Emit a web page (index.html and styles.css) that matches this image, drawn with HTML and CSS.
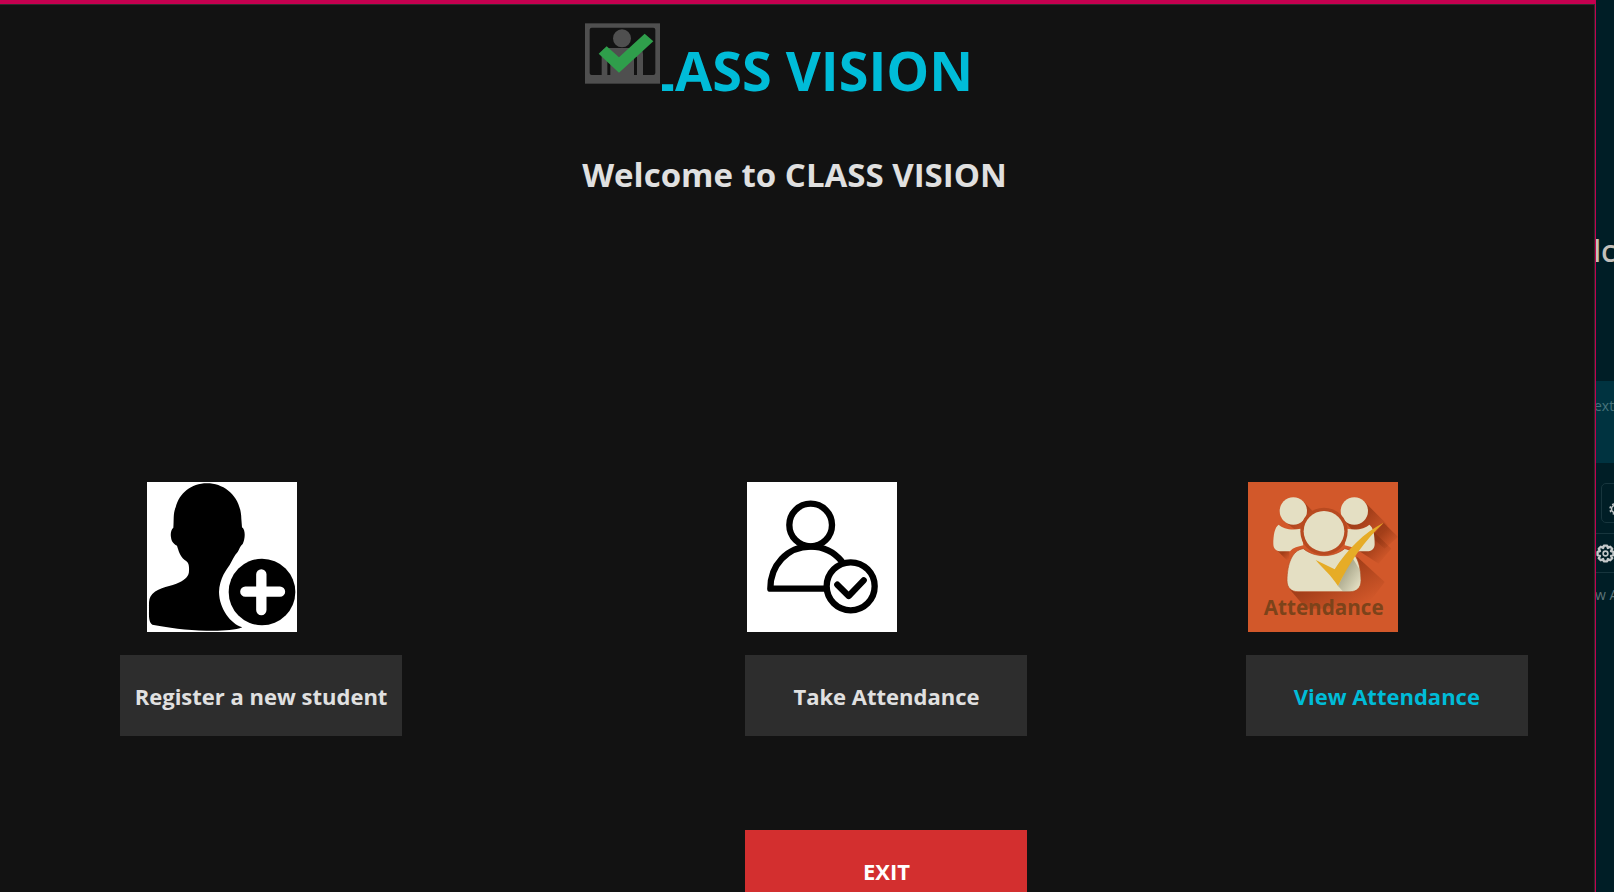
FILE: index.html
```html
<!DOCTYPE html>
<html lang="en">
<head>
<meta charset="utf-8">
<meta name="viewport" content="width=device-width, initial-scale=1">
<title>Class Vision</title>
<link rel="stylesheet" href="styles.css">
</head>
<body>
<div class="desktop">
  <main class="window">
    <header class="brand">
      <h1 class="brand-title">CLASS VISION</h1>
      <div class="brand-logo">
        <svg viewBox="0 0 225 181" aria-hidden="true">
          <rect width="225" height="181" fill="#4f4f4f"/>
          <rect x="14" y="13" width="197" height="142" rx="6" fill="#121212"/>
          <circle cx="111" cy="45" r="27" fill="#4f4f4f"/>
          <path fill="#4f4f4f" d="M50 156V92Q50 74 70 74H154Q174 74 174 92V156H156V100H147V156H76V100H67V156Z"/>
          <path fill="#2f9e4b" d="M41 91L65 69L102 102L179 31L205 54L102 148Z"/>
        </svg>
      </div>
    </header>
    <h2 class="welcome">Welcome to CLASS VISION</h2>
    <div class="actions">
      <section class="action action-register">
        <svg class="picture" viewBox="0 0 450 450" aria-hidden="true">
          <rect width="450" height="450" fill="#fff"/>
          <path d="M180 4C235 4 282 46 283 110L285 136C297 145 294 172 287 186C279 192 277 202 272 210C262 220 256 236 248 249C240 260 217 290 216 330C217 380 250 425 286 436C262 446 215 447 178 446C120 445 60 436 16 428C4 420 6 400 6 380C6 365 4 348 16 336C38 315 72 314 98 301C115 292 126 282 126 266C127 248 124 240 113 234C98 222 95 206 90 191C78 186 73 176 72 166C70 156 72 143 79 137C81 114 78 94 86 76C97 34 132 4 180 4Z"/>
          <circle cx="345" cy="330" r="100"/>
          <path d="M343 277V384M295 329H399" stroke="#fff" stroke-width="31" stroke-linecap="round"/>
        </svg>
        <button class="button" type="button">Register a new student</button>
      </section>
      <section class="action action-take">
        <svg class="picture" viewBox="0 0 450 450" aria-hidden="true">
          <rect width="450" height="450" fill="#fff"/>
          <g fill="none" stroke="#000" stroke-width="19" stroke-linecap="round" stroke-linejoin="round">
            <circle cx="191" cy="129" r="64"/>
            <path d="M238 320H70C70 250 120 194 191 194C230 194 262 211 284 238"/>
            <circle cx="311" cy="313" r="72"/>
            <path d="M271 308L305 342L350 295"/>
          </g>
        </svg>
        <button class="button" type="button">Take Attendance</button>
      </section>
      <section class="action action-view">
        <svg class="picture" viewBox="0 0 450 450" aria-hidden="true">
          <defs>
            <linearGradient id="cast" x1="0" y1="0" x2="1" y2="1">
              <stop offset="0.4" stop-color="#8f3412" stop-opacity="0.7"/>
              <stop offset="0.85" stop-color="#8f3412" stop-opacity="0"/>
            </linearGradient>
            <linearGradient id="fold" x1="0" y1="0" x2="1" y2="1">
              <stop offset="0.3" stop-color="#8c8c70" stop-opacity="0.7"/>
              <stop offset="0.9" stop-color="#8c8c70" stop-opacity="0"/>
            </linearGradient>
          </defs>
          <rect width="450" height="450" fill="#d2582a"/>
          <g fill="url(#cast)">
            <path d="M164 57L206 99L150 150L108 117Z"/>
            <path d="M347 57L420 130L350 190L290 117Z"/>
            <path d="M378 150L430 200L392 245L330 205Z"/>
            <path d="M84 202L124 242V205Z"/>
            <path d="M407 122L450 165L410 200L370 165Z"/>
            <path d="M328 225L410 300L350 380H175L125 322Z"/>
          </g>
          <g fill="#e4dfc3">
            <circle cx="136" cy="87" r="41"/>
            <circle cx="319" cy="87" r="41"/>
            <path d="M92 128C80 135 76 160 76 187C76 203 88 208 98 208H126C136 196 150 194 166 190L158 140C130 146 105 140 92 128Z"/>
            <path d="M364 128C376 135 380 160 380 187C380 203 368 208 358 208H330C320 196 306 194 290 190L298 140C326 146 351 140 364 128Z"/>
          </g>
          <circle cx="228" cy="148" r="71" fill="#b84a20"/>
          <path fill="#e4dfc3" stroke="#b84a20" stroke-width="2" d="M166 200C132 205 118 245 117 295C117 318 130 329 150 329H306C326 329 339 318 339 295C338 245 324 205 290 200C255 228 200 228 166 200Z"/>
          <circle cx="228" cy="148" r="61" fill="#e4dfc3"/>
          <path fill="url(#fold)" d="M270 312L312 225L339 270V295C339 318 326 329 306 329H286Z"/>
          <path fill="#e6ac26" d="M203 234L260 262C295 205 350 150 407 122C350 175 305 240 270 312C250 280 225 260 203 234Z"/>
          <text class="picture-label" x="227" y="398" text-anchor="middle">Attendance</text>
        </svg>
        <button class="button button-active" type="button">View Attendance</button>
      </section>
      <button class="button button-exit" type="button">EXIT</button>
    </div>
  </main>
  <aside class="behind">
    <p class="behind-title">lc</p>
    <p class="behind-band">ext</p>
    <div class="behind-card">
      <svg class="gear-small" viewBox="0 0 24 24" aria-hidden="true"><g fill="none" stroke="#c3c8c9" stroke-width="3"><circle cx="12" cy="12" r="7"/><circle cx="12" cy="12" r="10" stroke-dasharray="4 4"/></g></svg>
    </div>
    <div class="behind-row">
      <svg class="gear" viewBox="0 0 24 24" aria-hidden="true"><path fill="none" stroke="#c3c8c9" stroke-width="3" stroke-linejoin="round" d="M10 2H14L15 5L18 3.500L20.500 6L19 9L22 10V14L19 15L20.500 18L18 20.500L15 19L14 22H10L9 19L6 20.500L3.500 18L5 15L2 14V10L5 9L3.500 6L6 3.500L9 5Z"/><circle cx="12" cy="12" r="3" fill="none" stroke="#c3c8c9" stroke-width="2"/></svg>
    </div>
    <p class="behind-foot">w A</p>
  </aside>
</div>
</body>
</html>
```
FILE: styles.css
```css
* { box-sizing: border-box; }

body {
  margin: 0;
  background: #001e26;
  font-family: "Open Sans", "Noto Sans", sans-serif;
}

h1, h2, p { margin: 0; }

.desktop {
  display: grid;
  grid-template-columns: minmax(0, 1fr) 18px;
  height: 100vh;
  overflow: hidden;
}

.window {
  background: #121212;
  border-top: 4px solid #c4004f;
  border-right: 1px solid #c4004f;
  box-shadow: inset -1px 1px 0 #2d2d2d;
}

.brand {
  position: relative;
  width: 425px;
  margin: 0 auto;
  padding-left: 25px;
}

.brand-title {
  padding-top: 28px;
  color: #00bcd8;
  font-size: 54px;
  font-weight: 700;
  line-height: 76px;
  white-space: nowrap;
}

.brand-logo {
  position: absolute;
  top: 19px;
  left: 0;
  width: 77px;
  height: 77px;
  background: #121212;
}

.brand-logo svg {
  display: block;
  width: 75px;
  height: 61px;
}

.welcome {
  padding: 43px 6px 0 0;
  color: #e0e0e0;
  font-size: 33px;
  font-weight: 700;
  line-height: 48px;
  text-align: center;
}

.actions {
  display: grid;
  grid-template-columns: 120fr 625fr 500fr 349fr;
  row-gap: 94px;
  padding-top: 283px;
}

.action-register { grid-column: 2; }

.picture {
  display: block;
  width: 150px;
  height: 150px;
  margin: 0 0 23px 2px;
}

.action-register .picture { margin-left: 27px; }

.picture-label {
  fill: #7c431a;
  font-size: 62px;
  font-weight: 700;
}

.button {
  display: block;
  width: 282px;
  padding: 25px 0 23px;
  border: 0;
  background: #2d2d2d;
  color: #e0e0e0;
  font: 700 22px/33px "Open Sans", "Noto Sans", sans-serif;
  white-space: nowrap;
}

.button-active { color: #00bcd8; }

.button-exit {
  grid-column: 3;
  background: #d32f2f;
  color: #fff;
}

.behind {
  overflow: hidden;
  color: #5d7478;
  font-size: 14px;
  line-height: 24px;
  white-space: nowrap;
}

.behind-title {
  height: 381px;
  padding-top: 229px;
  color: #c4c0ba;
  font-family: "Noto Sans", sans-serif;
  font-size: 30px;
  font-weight: 500;
  line-height: 44px;
  text-indent: -3px;
}

.behind-band {
  height: 82px;
  padding-top: 13px;
  background: #003340;
  color: #47737c;
  text-indent: -2px;
}

.behind-card {
  width: 40px;
  height: 40px;
  margin: 20px 0 10px 5px;
  padding: 19px 0 0 7px;
  border: 1px solid #17353d;
  border-radius: 5px;
}

.gear-small {
  display: block;
  width: 12px;
  height: 12px;
}

.behind-row {
  padding: 10px 0 9px;
  border-top: 1px solid #17353d;
  border-bottom: 1px solid #17353d;
}

.gear {
  display: block;
  width: 19px;
  height: 19px;
}

.behind-foot {
  padding-top: 10px;
  text-indent: -1px;
}
```
